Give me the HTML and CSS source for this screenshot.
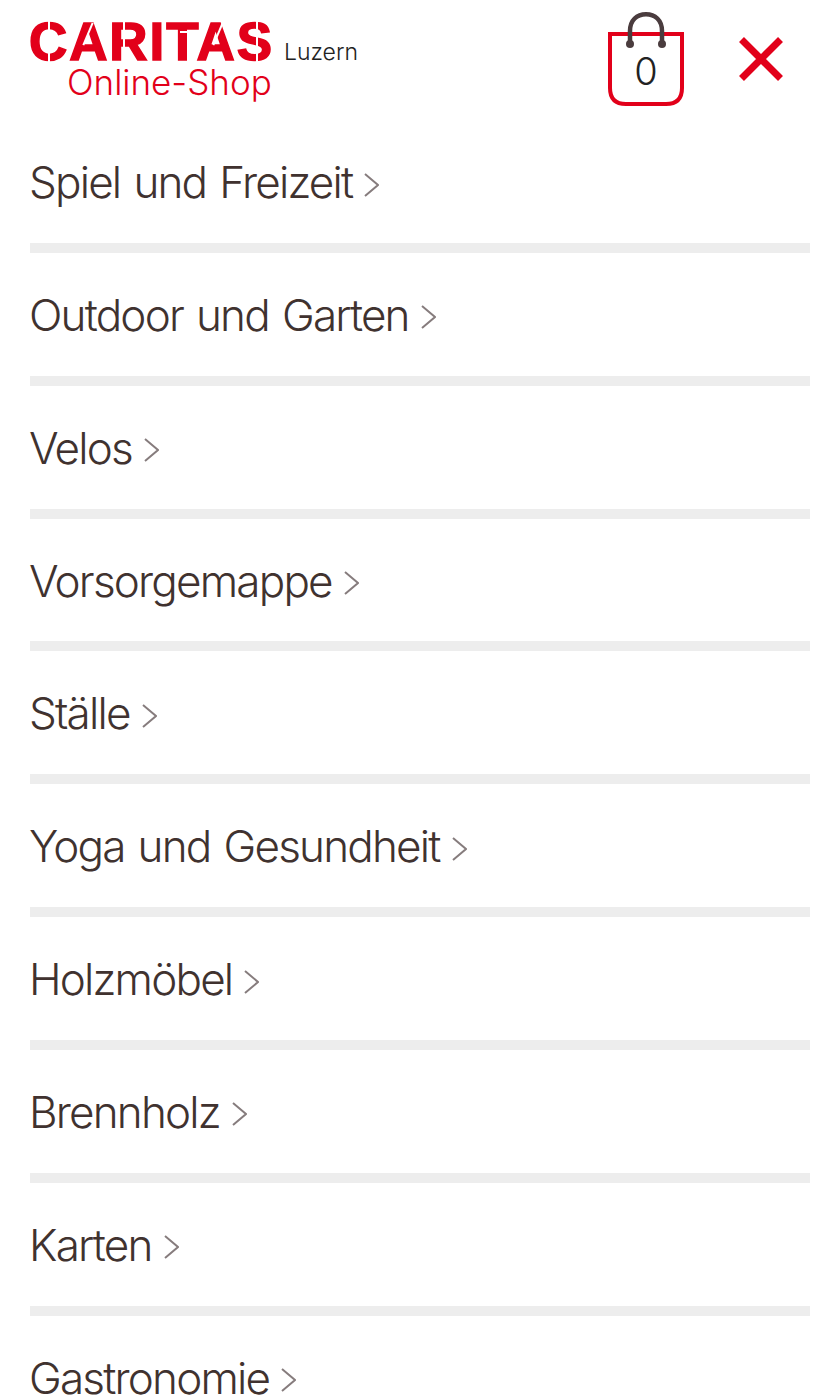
FILE: index.html
```html
<!DOCTYPE html>
<html lang="de">
<head>
    <meta charset="UTF-8">
    <title>Caritas Luzern Online-Shop</title>
    <link rel="stylesheet" href="styles.css">
</head>
<body>
    <div class="page">
        <header class="head">
            <a class="logo" href="#">
                <span class="logo-top">
                    <span class="logo-name">CARITAS
                        <i class="cut cut-c"></i>
                        <i class="cut cut-a1"></i>
                        <i class="cut cut-r"></i>
                        <i class="cut cut-t"></i>
                        <i class="cut cut-a2"></i>
                        <i class="cut cut-s"></i>
                    </span>
                    <span class="logo-city">Luzern</span>
                </span>
                <span class="logo-shop">Online-Shop</span>
            </a>
            <a class="cart" href="#">
                <svg class="cart-icon" width="76" height="94" viewBox="0 0 76 94">
                    <path d="M2 22H74V76Q74 92 58 92H18Q2 92 2 76Z" fill="none" stroke="#e2001a" stroke-width="4"/>
                    <path d="M22 32V19C22 8 29 2.25 38 2.25S54 8 54 19V32" fill="none" stroke="#4a3c3e" stroke-width="4.5"/>
                    <circle cx="22" cy="32" r="4" fill="#4a3c3e"/>
                    <circle cx="54" cy="32" r="4" fill="#4a3c3e"/>
                </svg>
                <span class="cart-count">0</span>
            </a>
            <a class="close" href="#">
                <svg width="44" height="44" viewBox="0 0 44 44">
                    <path d="M2.5 2.5L41.5 41.5M41.5 2.5L2.5 41.5" stroke="#e2001a" stroke-width="7"/>
                </svg>
            </a>
        </header>
        <ul class="menu">
            <li><a href="#">Spiel und Freizeit <svg class="arrow" viewBox="0 0 15 24"><path d="M1 1L14 12L1 23"/></svg></a></li>
            <li><a href="#">Outdoor und Garten <svg class="arrow" viewBox="0 0 15 24"><path d="M1 1L14 12L1 23"/></svg></a></li>
            <li><a href="#">Velos <svg class="arrow" viewBox="0 0 15 24"><path d="M1 1L14 12L1 23"/></svg></a></li>
            <li><a href="#">Vorsorgemappe <svg class="arrow" viewBox="0 0 15 24"><path d="M1 1L14 12L1 23"/></svg></a></li>
            <li><a href="#">Ställe <svg class="arrow" viewBox="0 0 15 24"><path d="M1 1L14 12L1 23"/></svg></a></li>
            <li><a href="#">Yoga und Gesundheit <svg class="arrow" viewBox="0 0 15 24"><path d="M1 1L14 12L1 23"/></svg></a></li>
            <li><a href="#">Holzmöbel <svg class="arrow" viewBox="0 0 15 24"><path d="M1 1L14 12L1 23"/></svg></a></li>
            <li><a href="#">Brennholz <svg class="arrow" viewBox="0 0 15 24"><path d="M1 1L14 12L1 23"/></svg></a></li>
            <li><a href="#">Karten <svg class="arrow" viewBox="0 0 15 24"><path d="M1 1L14 12L1 23"/></svg></a></li>
            <li><a href="#">Gastronomie <svg class="arrow" viewBox="0 0 15 24"><path d="M1 1L14 12L1 23"/></svg></a></li>
        </ul>
    </div>
</body>
</html>
```

FILE: styles.css
```css
* {
    margin: 0;
    padding: 0;
    list-style: none;
    box-sizing: border-box;
}
html, body {
    height: 1400px;
    overflow: hidden;
}
body {
    background: #fff;
    font-family: Inter, "Liberation Sans", sans-serif;
    font-weight: 300;
    color: #40322f;
}
a {
    color: inherit;
    text-decoration: none;
}
.page {
    padding: 0 30px;
}
.head {
    height: 120px;
    display: flex;
    align-items: flex-start;
}
.logo {
    display: flex;
    flex-direction: column;
    margin-top: 19px;
}
.logo-top {
    display: flex;
    align-items: flex-end;
    gap: 10px;
    height: 46px;
}
.logo-name {
    position: relative;
    margin-left: -1px;
    font-family: "Liberation Sans", sans-serif;
    font-weight: 700;
    font-size: 53px;
    line-height: 46px;
    letter-spacing: 1.9px;
    color: #e2001a;
    -webkit-text-stroke: 1.5px #e2001a;
}
.cut {
    position: absolute;
    display: block;
    background: #fff;
}
.cut-c {
    left: 19px;
    top: 0;
    width: 2px;
    height: 46px;
}
.cut-a1 {
    left: 58px;
    top: 3px;
    width: 2px;
    height: 24px;
    transform: rotate(23deg);
}
.cut-r {
    left: 94px;
    top: 3px;
    width: 2px;
    height: 32px;
}
.cut-t {
    left: 151px;
    top: 12px;
    width: 16px;
    height: 2px;
}
.cut-a2 {
    left: 188px;
    top: 3px;
    width: 2px;
    height: 24px;
    transform: rotate(23deg);
}
.cut-s {
    left: 227px;
    top: 0;
    width: 2px;
    height: 46px;
}
.logo-city {
    font-size: 23px;
    line-height: 26px;
    color: #222;
}
.logo-shop {
    font-size: 35px;
    line-height: 38px;
    margin-left: 37px;
    margin-top: -2px;
    color: #e2001a;
}
.cart {
    position: relative;
    display: block;
    width: 76px;
    height: 94px;
    margin: 12px 0 0 auto;
}
.cart-icon {
    display: block;
}
.cart-count {
    position: absolute;
    left: 0;
    right: 0;
    top: 37px;
    text-align: center;
    font-size: 38px;
    line-height: 44px;
    color: #222;
}
.close {
    display: block;
    margin: 37px 27px 0 55px;
    width: 44px;
    height: 44px;
}
.menu li {
    height: 132.85px;
    border-bottom: 10px solid #ededed;
}
.menu a {
    display: flex;
    align-items: center;
    gap: 12px;
    height: 123px;
    padding-top: 1px;
    margin-left: -1px;
    font-size: 44px;
    letter-spacing: -1.8px;
    word-spacing: 2.5px;
}
.arrow {
    display: block;
    width: 15px;
    height: 24px;
    margin-top: 5px;
    fill: none;
    stroke: #867c7d;
    stroke-width: 2;
}
```
